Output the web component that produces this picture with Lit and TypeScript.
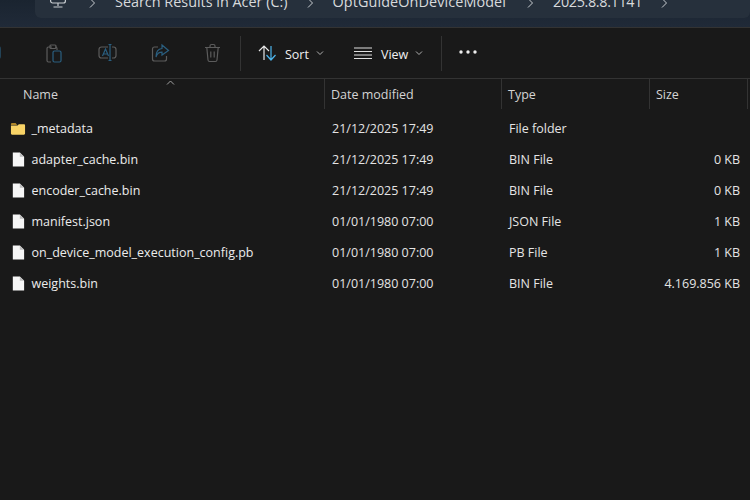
import { LitElement, html, css, svg } from 'lit';
import { customElement } from 'lit/decorators.js';

const rows = [
  { name: '_metadata', date: '21/12/2025 17:49', type: 'File folder', size: '', folder: true },
  { name: 'adapter_cache.bin', date: '21/12/2025 17:49', type: 'BIN File', size: '0 KB' },
  { name: 'encoder_cache.bin', date: '21/12/2025 17:49', type: 'BIN File', size: '0 KB' },
  { name: 'manifest.json', date: '01/01/1980 07:00', type: 'JSON File', size: '1 KB' },
  { name: 'on_device_model_execution_config.pb', date: '01/01/1980 07:00', type: 'PB File', size: '1 KB' },
  { name: 'weights.bin', date: '01/01/1980 07:00', type: 'BIN File', size: '4.169.856 KB' },
];

const GREY = '#5c5c5c';
const BLUE = '#2a5f80';

const chevron = html`<svg class="crumb-sep" width="8" height="10" viewBox="0 0 8 10"><path d="M2 .5 6.500 5 2 9.500" fill="none" stroke="#c8ccd0" stroke-width="1"/></svg>`;

const folderIcon = html`<svg class="file-icon" width="17" height="16" viewBox="0 0 17 16">
  <path d="M1 3.200C1 2.500 1.500 2 2.200 2H6l1.600 1.400H1z" fill="#e0a92e"/>
  <path d="M1 4.400h7l1.400-1.400h5.400c.7 0 1.200.5 1.200 1.200v8.600c0 .7-.5 1.200-1.200 1.200H2.200C1.500 14 1 13.500 1 12.800z" fill="#f8d366"/>
</svg>`;

const fileIcon = html`<svg class="file-icon" width="17" height="17" viewBox="0 0 17 17">
  <path d="M3 1h7.400L15 5.600V16H3z" fill="#f6f6f6"/>
  <path d="M10.400 1 15 5.600h-4.600z" fill="#bdbdbd"/>
</svg>`;

const copyIcon = svg`
  <rect x="-6" y="3" width="15" height="13" rx="2.500" fill="none" stroke="${BLUE}" stroke-width="1.200"/>
  <path d="M-3 16v2h6" fill="none" stroke="${GREY}" stroke-width="1.200"/>`;
const pasteIcon = svg`
  <path d="M7 4H3.500C2.600 4 2 4.600 2 5.500v12c0 .9.6 1.500 1.500 1.500H6M12 7V5.500C12 4.600 11.400 4 10.500 4H10" fill="none" stroke="${GREY}" stroke-width="1.200"/>
  <rect x="5" y="2" width="6" height="3.500" rx="1" fill="none" stroke="${GREY}" stroke-width="1.200"/>
  <rect x="8" y="8" width="8" height="11" rx="1.500" fill="none" stroke="${BLUE}" stroke-width="1.200"/>`;
const renameIcon = svg`
  <path d="M10 4H3.500C2 4 1 5 1 6.500v6C1 14 2 15 3.500 15H10M14 4h1.500C17 4 18 5 18 6.500v6c0 1.500-1 2.500-2.500 2.500H14" fill="none" stroke="${GREY}" stroke-width="1.200"/>
  <path d="M4.500 13 7.500 6l3 7M5.500 11h4M12 2v15M10.500 1.500h3M10.500 17.500h3" fill="none" stroke="${BLUE}" stroke-width="1.200"/>`;
const shareIcon = svg`
  <path d="M7 4H3.500C2.300 4 1.500 4.800 1.500 6v10c0 1.200.8 2 2 2h10c1.200 0 2-.8 2-2v-3" fill="none" stroke="${GREY}" stroke-width="1.200"/>
  <path d="M11 2l6.500 5.500L11 12V9.200C8 9.200 6 10.500 5 14c0-5 2-8.200 6-8.500z" fill="none" stroke="${BLUE}" stroke-width="1.200"/>`;
const trashIcon = svg`
  <path d="M1 4.500h15M6 4.500V3c0-.9.6-1.500 1.500-1.500h2c.9 0 1.500.6 1.500 1.500v1.500M2.800 4.500 4 17c.1.9.7 1.500 1.600 1.500h5.800c.9 0 1.500-.6 1.600-1.500l1.200-12.500M6.800 8.500v6M10.200 8.500v6" fill="none" stroke="${GREY}" stroke-width="1.200"/>`;

@customElement('app-root')
export class AppRoot extends LitElement {
  static styles = css`
    :host {
      display: block;
      width: 750px;
      height: 500px;
      overflow: hidden;
      background: #191919;
      color: #e6e6e6;
      font-family: 'Open Sans', 'Noto Sans', sans-serif;
      font-size: 12.5px;
    }

    .top {
      height: 27px;
      background: linear-gradient(#1a2430, #202a38);
      border-bottom: 1px solid #333;
      padding-left: 35px;
    }

    .address {
      height: 18px;
      background: #26303c;
      border-radius: 0 0 6px 6px;
      display: flex;
      align-items: flex-end;
      overflow: hidden;
      padding-left: 15px;
      color: #d8dadc;
      font-size: 14.4px;
      line-height: 20px;
    }

    .address > * {
      flex: none;
      margin-bottom: 6px;
    }

    .address .monitor {
      margin: 0 4px 9px 0;
    }

    .address .crumb-sep {
      margin: 0 19px 10px 18px;
    }

    .address .opt {
      margin-right: 2px;
      letter-spacing: 0.1px;
    }

    .address .version {
      letter-spacing: -0.35px;
    }

    .toolbar {
      height: 50px;
      display: flex;
      align-items: center;
      border-bottom: 1px solid #333;
    }

    .tool {
      width: 53px;
      display: flex;
      justify-content: center;
      flex: none;
    }

    .tool svg {
      display: block;
      overflow: visible;
    }

    .first {
      width: 0;
      margin-right: 28px;
    }

    .divider {
      width: 1px;
      height: 35px;
      background: #333;
      flex: none;
    }

    .action {
      display: flex;
      align-items: center;
      flex: none;
      color: #f0f0f0;
    }

    .action span {
      padding-top: 2px;
    }

    .action .caret {
      margin-left: 7px;
    }

    .sort {
      margin-left: 17px;
    }

    .sort-icon {
      margin-right: 8px;
    }

    .view {
      margin-left: 30px;
    }

    .view-icon {
      margin-right: 9px;
    }

    .more-divider {
      margin-left: 18px;
    }

    .more {
      margin: -2px 0 0 17px;
    }

    .header,
    .row {
      display: grid;
      grid-template-columns: 325px 177px 148px 98px;
    }

    .header {
      height: 30px;
      align-items: center;
      color: #d4d4d4;
      position: relative;
    }

    .header > div {
      height: 100%;
      display: flex;
      align-items: center;
      border-right: 1px solid #333;
      padding-left: 6px;
      box-sizing: border-box;
    }

    .header > div:first-of-type {
      padding-left: 23px;
    }

    .sort-arrow {
      position: absolute;
      left: 166px;
      top: 1px;
    }

    .list {
      padding-top: 4px;
    }

    .row {
      height: 31px;
      align-items: center;
      color: #e4e4e4;
    }

    .row > div {
      padding-left: 7px;
      white-space: nowrap;
    }

    .row .name {
      display: flex;
      align-items: center;
      gap: 5.500px;
      padding-left: 10px;
      color: #ececec;
    }

    .file-icon {
      flex: none;
      width: 16px;
    }

    .row .size {
      text-align: right;
      padding-right: 8px;
    }
  `;

  private tool(icon: unknown, cls = '') {
    return html`<div class="tool ${cls}"><svg width="19" height="20" viewBox="0 0 19 20">${icon}</svg></div>`;
  }

  render() {
    return html`
      <div class="top">
        <div class="address">
          <svg class="monitor" width="16" height="14" viewBox="0 0 16 14">
            <rect x=".6" y="-4" width="14.800" height="12" rx="2" fill="none" stroke="#c8ccd0" stroke-width="1.200"/>
            <path d="M8 8v3M3.500 12h9" stroke="#c8ccd0" stroke-width="1.200"/>
          </svg>
          ${chevron}
          <span>Search Results in Acer (C:)</span>
          ${chevron}
          <span class="opt">OptGuideOnDeviceModel</span>
          ${chevron}
          <span class="version">2025.8.8.1141</span>
          ${chevron}
        </div>
      </div>
      <div class="toolbar">
        ${this.tool(copyIcon, 'first')}
        ${this.tool(pasteIcon)}
        ${this.tool(renameIcon)}
        ${this.tool(shareIcon)}
        ${this.tool(trashIcon)}
        <div class="divider"></div>
        <div class="action sort">
          <svg class="sort-icon" width="19" height="18" viewBox="0 0 19 18">
            <path d="M6 16V2M1 7l5-5 5 5" fill="none" stroke="#e8e8e8" stroke-width="1.200"/>
            <path d="M13 2v14M8.500 11l4.500 5 4.500-5" fill="none" stroke="#4cb4ec" stroke-width="1.200"/>
          </svg>
          <span>Sort</span>
          <svg class="caret" width="8" height="6" viewBox="0 0 8 6"><path d="M1 1.500 4 4.500 7 1.500" fill="none" stroke="#b0b0b0"/></svg>
        </div>
        <div class="action view">
          <svg class="view-icon" width="18" height="14" viewBox="0 0 18 14">
            <path d="M0 2h18M0 5.500h18M0 9h18M0 12.500h18" stroke="#e0e0e0" stroke-width="1.200"/>
          </svg>
          <span>View</span>
          <svg class="caret" width="8" height="6" viewBox="0 0 8 6"><path d="M1 1.500 4 4.500 7 1.500" fill="none" stroke="#b0b0b0"/></svg>
        </div>
        <div class="divider more-divider"></div>
        <svg class="more" width="18" height="4" viewBox="0 0 18 4">
          <circle cx="2" cy="2" r="1.700" fill="#eee"/><circle cx="9" cy="2" r="1.700" fill="#eee"/><circle cx="16" cy="2" r="1.700" fill="#eee"/>
        </svg>
      </div>
      <div class="header">
        <svg class="sort-arrow" width="9" height="5" viewBox="0 0 9 5"><path d="M1 4.500 4.500 1 8 4.500" fill="none" stroke="#a0a0a0"/></svg>
        <div>Name</div>
        <div>Date modified</div>
        <div>Type</div>
        <div>Size</div>
      </div>
      <div class="list">
        ${rows.map(
          (r) => html`
            <div class="row">
              <div class="name">${r.folder ? folderIcon : fileIcon}<span>${r.name}</span></div>
              <div>${r.date}</div>
              <div>${r.type}</div>
              <div class="size">${r.size}</div>
            </div>
          `
        )}
      </div>
    `;
  }
}
